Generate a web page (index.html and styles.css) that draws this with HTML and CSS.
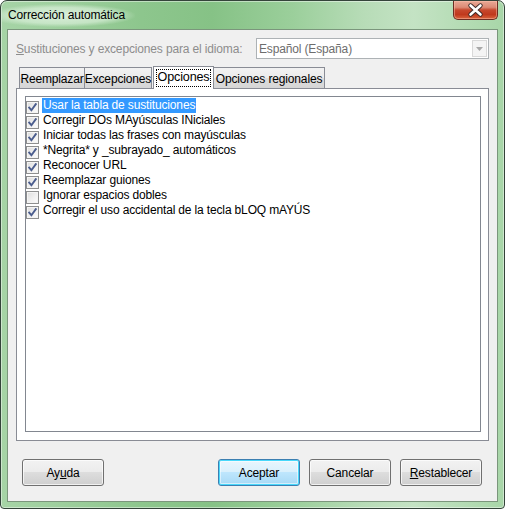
FILE: index.html
```html
<!DOCTYPE html>
<html lang="es">
<head>
<meta charset="utf-8">
<title>Corrección automática</title>
<link rel="stylesheet" href="styles.css">
</head>
<body>
<div class="window">
  <div class="titlebar">
    <span class="title">Corrección automática</span>
    <div class="close">
      <svg width="45" height="19" viewBox="0 0 45 19">
        <path d="M17.5 5.5 L27.5 14.5 M27.5 5.5 L17.5 14.5" stroke="#3b2a28" stroke-width="4.4" stroke-linecap="round"/>
        <path d="M17.5 5.5 L27.5 14.5 M27.5 5.5 L17.5 14.5" stroke="#ffffff" stroke-width="2.6" stroke-linecap="round"/>
      </svg>
    </div>
  </div>
  <div class="client">
    <div class="lang-row">
      <span class="lang-label"><u>S</u>ustituciones y excepciones para el idioma:</span>
      <div class="combo">
        <span class="combo-text">Español (España)</span>
        <div class="combo-btn">
          <svg width="7" height="4" viewBox="0 0 7 4"><path d="M0 0 H7 L3.5 4 Z" fill="#a8a8a8"/></svg>
        </div>
      </div>
    </div>
    <div class="tabs">
      <div class="tab tab-w1">Reemplazar</div>
      <div class="tab tab-w2">Excepciones</div>
      <div class="tab tab-active"><span class="focus">Opciones</span></div>
      <div class="tab tab-w4">Opciones regionales</div>
    </div>
    <div class="panel">
      <div class="list">
        <div class="row"><span class="cb cb-on"></span><span class="label selected">Usar la tabla de sustituciones</span></div>
        <div class="row"><span class="cb cb-on"></span><span class="label">Corregir DOs MAyúsculas INiciales</span></div>
        <div class="row"><span class="cb cb-on"></span><span class="label">Iniciar todas las frases con mayúsculas</span></div>
        <div class="row"><span class="cb cb-on"></span><span class="label">*Negrita* y _subrayado_ automáticos</span></div>
        <div class="row"><span class="cb cb-on"></span><span class="label">Reconocer URL</span></div>
        <div class="row"><span class="cb cb-on"></span><span class="label">Reemplazar guiones</span></div>
        <div class="row"><span class="cb"></span><span class="label">Ignorar espacios dobles</span></div>
        <div class="row"><span class="cb cb-on"></span><span class="label">Corregir el uso accidental de la tecla bLOQ mAYÚS</span></div>
      </div>
    </div>
    <div class="buttons">
      <button class="btn">Ay<u>u</u>da</button>
      <span class="spacer"></span>
      <button class="btn btn-default">Aceptar</button>
      <button class="btn">Cancelar</button>
      <button class="btn"><u>R</u>establecer</button>
    </div>
  </div>
</div>
</body>
</html>
```
FILE: styles.css
```css
html, body {
  margin: 0;
  padding: 0;
  background: #ffffff;
}

.window {
  width: 505px;
  height: 509px;
  box-sizing: border-box;
  border: 1px solid #34443a;
  border-radius: 7px 7px 4px 4px;
  padding: 0 6px 6px 6px;
  display: flex;
  flex-direction: column;
  background:
    linear-gradient(90deg, #a6d4a6 0%, #9fd09f 10%, #8dc68d 28%, #86c286 42%, #9bcf9b 58%, #b7dcb7 72%, #c4e3c4 82%, #a8d6a8 100%);
  box-shadow: inset 0 0 0 1px rgba(255, 255, 255, 0.45);
  font-family: "Liberation Sans", Arial, sans-serif;
  font-size: 12px;
  letter-spacing: -0.15px;
  color: #000;
  overflow: hidden;
}

.titlebar {
  height: 28px;
  display: flex;
  align-items: flex-start;
}

.title {
  margin-left: -6px;
  margin-top: 3px;
  padding: 4px 10px 5px 7px;
  line-height: 14px;
  color: #000;
  background: radial-gradient(ellipse at 45% 50%, rgba(225, 242, 225, 0.9) 0%, rgba(215, 238, 215, 0.7) 50%, rgba(200, 230, 200, 0) 72%);
}

.close {
  margin-left: auto;
  width: 45px;
  height: 19px;
  box-sizing: border-box;
  border: 1px solid #6b2d22;
  border-top: none;
  border-radius: 0 0 5px 5px;
  background: linear-gradient(180deg, #e9a996 0%, #dc8b76 35%, #c6482d 50%, #c0391d 75%, #d9643e 100%);
  box-shadow: inset 0 0 0 1px rgba(255, 200, 180, 0.45);
}

.close svg {
  display: block;
  margin: -1px 0 0 -1px;
}

.client {
  flex: 1;
  background: #f0f0f0;
  border: 1px solid #7b967c;
  display: flex;
  flex-direction: column;
}

.lang-row {
  display: flex;
  align-items: center;
  margin-top: 8px;
  padding: 0 8px;
  height: 21px;
}

.lang-label {
  color: #8d8d8d;
  line-height: 14px;
}

.combo {
  margin-left: auto;
  width: 233px;
  height: 21px;
  box-sizing: border-box;
  border: 1px solid #adb2b5;
  background: #ffffff;
  display: flex;
  align-items: center;
}

.combo-text {
  padding-left: 2px;
  color: #6d6d6d;
  flex: 1;
}

.combo-btn {
  width: 15px;
  height: 17px;
  margin-right: 1px;
  box-sizing: border-box;
  border: 1px solid #d9d9d9;
  background: #f4f4f4;
  display: flex;
  align-items: center;
  justify-content: center;
}

.tabs {
  display: flex;
  align-items: flex-end;
  margin-top: 7px;
  padding-left: 11px;
  height: 22px;
  position: relative;
  z-index: 1;
}

.tab {
  height: 21px;
  box-sizing: border-box;
  border: 1px solid #898c95;
  border-bottom: none;
  background: linear-gradient(180deg, #f2f2f2 0%, #ebebeb 50%, #dddddd 51%, #d6d6d6 100%);
  display: flex;
  align-items: center;
  justify-content: center;
  line-height: 14px;
  padding-top: 1px;
}

.tab-w1 { width: 66px; }
.tab-w2 { width: 68px; margin-left: -1px; }
.tab-w4 { width: 112px; margin-left: -1px; }

.tab-active {
  width: 61px;
  height: 23px;
  margin-left: 1px;
  margin-bottom: -1px;
  background: #ffffff;
  padding-top: 0;
  align-items: flex-start;
}

.focus {
  margin-top: 2px;
  padding: 1px 1px 2px 1px;
  outline: 1px dotted #000;
  outline-offset: -1px;
  font-size: 12.6px;
  line-height: 15px;
}

.panel {
  margin: 0 8px;
  height: 353px;
  box-sizing: border-box;
  border: 1px solid #898c95;
  background: #ffffff;
  padding: 7px 7px 8px 8px;
  display: flex;
}

.list {
  flex: 1;
  border: 1px solid #828790;
  background: #ffffff;
  padding: 1px 0 0 0;
}

.row {
  height: 15px;
  display: flex;
  align-items: flex-start;
  line-height: 15px;
}

.cb {
  width: 13px;
  height: 13px;
  box-sizing: border-box;
  margin: 3px 3px 0 0;
  flex: none;
  border: 1px solid #8e8f8f;
  background: linear-gradient(135deg, #dcdcdc 0%, #f0f0f0 55%, #fdfdfd 100%);
  box-shadow: inset 0 0 0 1px #f4f4f4;
}

.cb-on {
  background-image:
    url("data:image/svg+xml,%3Csvg xmlns='http://www.w3.org/2000/svg' width='11' height='11' viewBox='0 0 11 11'%3E%3Cpath d='M2.2 5.6 L4.4 8.2 L8.8 2.2' fill='none' stroke='%234b5d8e' stroke-width='1.9' stroke-linecap='square'/%3E%3C/svg%3E"),
    linear-gradient(135deg, #dcdcdc 0%, #f0f0f0 55%, #fdfdfd 100%);
  background-repeat: no-repeat;
  background-position: 0 0, 0 0;
}

.label {
  padding: 0 1px;
  height: 15px;
}

.selected {
  background: #3399ff;
  color: #ffffff;
}

.buttons {
  display: flex;
  margin-top: 18px;
  padding: 0 15px 0 14px;
  gap: 9px;
}

.spacer {
  flex: 1;
}

.btn {
  width: 82px;
  height: 27px;
  box-sizing: border-box;
  border: 1px solid #707070;
  border-radius: 3px;
  background: linear-gradient(180deg, #f2f2f2 0%, #ebebeb 49%, #dddddd 50%, #cfcfcf 100%);
  box-shadow: inset 0 0 0 1px rgba(255, 255, 255, 0.7);
  font-family: "Liberation Sans", Arial, sans-serif;
  font-size: 12px;
  letter-spacing: -0.15px;
  color: #000;
  padding: 0;
  margin: 0;
}

.btn-default {
  border-color: #3c7fb1;
  box-shadow: inset 0 0 0 1px #48d8fb, inset 0 0 0 2px rgba(255, 255, 255, 0.5);
  background: linear-gradient(180deg, #eaf6fd 0%, #d9f0fc 49%, #bee6fd 50%, #a7d9f5 100%);
}
```
